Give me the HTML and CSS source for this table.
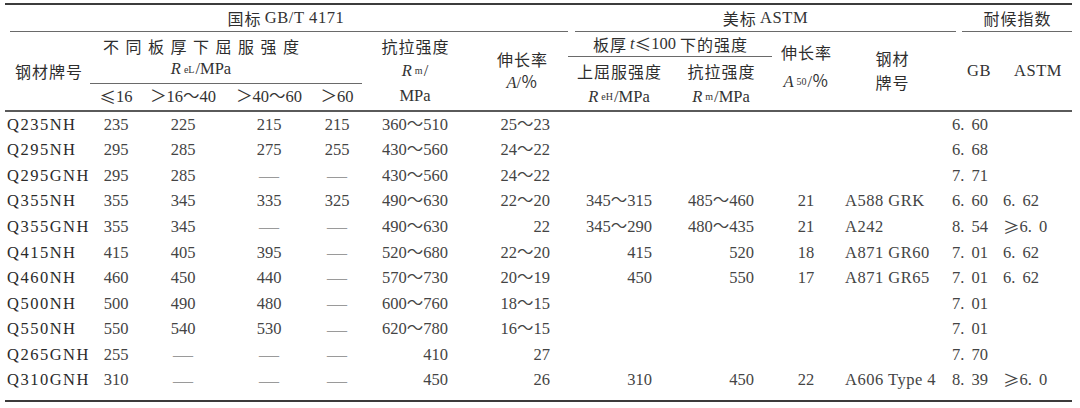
FILE: index.html
```html
<!DOCTYPE html>
<html lang="zh">
<head>
<meta charset="utf-8">
<link rel="stylesheet" href="styles.css">
</head>
<body>
<div class="tbl">
  <div class="head">
    <div class="c g1"><span class="zh">国标</span>&nbsp;<span class="lat">GB/T 4171</span></div>
    <div class="c g2"><span class="zh">美标</span>&nbsp;<span class="lat">ASTM</span></div>
    <div class="c g3"><span class="zh">耐候指数</span></div>

    <div class="c h-name"><span class="zh">钢材牌号</span></div>
    <div class="c stack h-yield">
      <div class="ln24"><span class="zh wide">不同板厚下屈服强度</span></div>
      <div class="ln24"><i>R</i><sub>eL</sub>/MPa</div>
    </div>
    <div class="c stack h-rm">
      <div class="ln25"><span class="zh">抗拉强度</span></div>
      <div class="ln25"><i>R</i><sub>m</sub>/</div>
      <div class="ln25">MPa</div>
    </div>
    <div class="c stack h-a">
      <div class="ln24"><span class="zh">伸长率</span></div>
      <div class="ln24"><i>A</i>/％</div>
    </div>
    <div class="c h-t"><span class="zh">板厚</span>&nbsp;<i>t</i><span class="cj">≤</span>100&nbsp;<span class="zh">下的强度</span></div>
    <div class="c stack h-a50">
      <div class="ln30"><span class="zh">伸长率</span></div>
      <div class="ln30"><i>A</i><sub>50</sub>/％</div>
    </div>
    <div class="c stack h-grade">
      <div class="ln24"><span class="zh">钢材</span></div>
      <div class="ln24"><span class="zh">牌号</span></div>
    </div>
    <div class="c h-gb"><span class="lat">GB</span></div>
    <div class="c h-astm"><span class="lat">ASTM</span></div>

    <div class="c h-up"><span class="zh">上屈服强度</span></div>
    <div class="c h-rm2"><span class="zh">抗拉强度</span></div>

    <div class="c h-t1"><span class="cj">≤</span>16</div>
    <div class="c h-t2">＞16～40</div>
    <div class="c h-t3">＞40～60</div>
    <div class="c h-t4">＞60</div>
    <div class="c h-reh"><i>R</i><sub>eH</sub>/MPa</div>
    <div class="c h-rm3"><i>R</i><sub>m</sub>/MPa</div>
  </div>

  <div class="body">
    <div class="c">Q235NH</div><div class="c">235</div><div class="c">225</div><div class="c">215</div><div class="c">215</div><div class="c">360～510</div><div class="c">25～23</div><div class="c"></div><div class="c"></div><div class="c"></div><div class="c"></div><div class="c">6. 60</div><div class="c"></div>
    <div class="c">Q295NH</div><div class="c">295</div><div class="c">285</div><div class="c">275</div><div class="c">255</div><div class="c">430～560</div><div class="c">24～22</div><div class="c"></div><div class="c"></div><div class="c"></div><div class="c"></div><div class="c">6. 68</div><div class="c"></div>
    <div class="c">Q295GNH</div><div class="c">295</div><div class="c">285</div><div class="c dash">—</div><div class="c dash">—</div><div class="c">430～560</div><div class="c">24～22</div><div class="c"></div><div class="c"></div><div class="c"></div><div class="c"></div><div class="c">7. 71</div><div class="c"></div>
    <div class="c">Q355NH</div><div class="c">355</div><div class="c">345</div><div class="c">335</div><div class="c">325</div><div class="c">490～630</div><div class="c">22～20</div><div class="c">345～315</div><div class="c">485～460</div><div class="c">21</div><div class="c">A588 GRK</div><div class="c">6. 60</div><div class="c">6. 62</div>
    <div class="c">Q355GNH</div><div class="c">355</div><div class="c">345</div><div class="c dash">—</div><div class="c dash">—</div><div class="c">490～630</div><div class="c">22</div><div class="c">345～290</div><div class="c">480～435</div><div class="c">21</div><div class="c">A242</div><div class="c">8. 54</div><div class="c"><span class="cj">≥</span>6. 0</div>
    <div class="c">Q415NH</div><div class="c">415</div><div class="c">405</div><div class="c">395</div><div class="c dash">—</div><div class="c">520～680</div><div class="c">22～20</div><div class="c">415</div><div class="c">520</div><div class="c">18</div><div class="c">A871 GR60</div><div class="c">7. 01</div><div class="c">6. 62</div>
    <div class="c">Q460NH</div><div class="c">460</div><div class="c">450</div><div class="c">440</div><div class="c dash">—</div><div class="c">570～730</div><div class="c">20～19</div><div class="c">450</div><div class="c">550</div><div class="c">17</div><div class="c">A871 GR65</div><div class="c">7. 01</div><div class="c">6. 62</div>
    <div class="c">Q500NH</div><div class="c">500</div><div class="c">490</div><div class="c">480</div><div class="c dash">—</div><div class="c">600～760</div><div class="c">18～15</div><div class="c"></div><div class="c"></div><div class="c"></div><div class="c"></div><div class="c">7. 01</div><div class="c"></div>
    <div class="c">Q550NH</div><div class="c">550</div><div class="c">540</div><div class="c">530</div><div class="c dash">—</div><div class="c">620～780</div><div class="c">16～15</div><div class="c"></div><div class="c"></div><div class="c"></div><div class="c"></div><div class="c">7. 01</div><div class="c"></div>
    <div class="c">Q265GNH</div><div class="c">255</div><div class="c dash">—</div><div class="c dash">—</div><div class="c dash">—</div><div class="c">410</div><div class="c">27</div><div class="c"></div><div class="c"></div><div class="c"></div><div class="c"></div><div class="c">7. 70</div><div class="c"></div>
    <div class="c">Q310GNH</div><div class="c">310</div><div class="c dash">—</div><div class="c dash">—</div><div class="c dash">—</div><div class="c">450</div><div class="c">26</div><div class="c">310</div><div class="c">450</div><div class="c">22</div><div class="c">A606 Type 4</div><div class="c">8. 39</div><div class="c"><span class="cj">≥</span>6. 0</div>
  </div>
</div>
</body>
</html>
```

FILE: styles.css
```css
* { box-sizing: border-box; margin: 0; padding: 0; }
body {
  background: #fff;
  font-family: "Liberation Serif", "Noto Sans CJK SC", serif;
  font-size: 16.5px;
  color: #444;
}
.tbl {
  margin: 3px 0 0 5px;
  width: 1067px;
  border-top: 2px solid #3c3c3c;
  border-bottom: 2px solid #3c3c3c;
}
.head, .body {
  display: grid;
  grid-template-columns: 87px 48px 86px 86px 50px 106px 100px 102px 102px 68px 110px 50px 72px;
}
.head {
  grid-template-rows: 27px 25px 27px 26px;
  border-bottom: 2px solid #5a5a5a;
  color: #333;
}
.body {
  grid-auto-rows: 25.6px;
  padding-bottom: 6px;
}
.c {
  display: flex;
  align-items: center;
  justify-content: center;
  white-space: nowrap;
  line-height: 1;
}
.stack { flex-direction: column; }
.ln24 { height: 24px; display: flex; align-items: center; justify-content: center; }
.ln25 { height: 25px; display: flex; align-items: center; justify-content: center; }
.ln30 { height: 30px; display: flex; align-items: center; justify-content: center; }

.zh {
  font-family: "Noto Sans CJK SC", sans-serif;
  font-size: 16px;
  letter-spacing: 1px;
  margin-right: -1px;
  color: #2e2e2e;
}
.zh.wide { letter-spacing: 6.5px; margin-right: -6.5px; }
.lat { letter-spacing: 0.6px; }
.cj { font-family: "Noto Sans CJK SC", sans-serif; }
i { font-style: italic; }
sub {
  font-size: 10px;
  vertical-align: -3px;
  margin: 0 1px 0 3px;
}

/* header placement */
.g1 { grid-column: 1 / 8; grid-row: 1; border-bottom: 1px solid #6a6a6a; margin-left: 5px; padding-right: 6px; }
.g2 { grid-column: 8 / 12; grid-row: 1; border-bottom: 1px solid #6a6a6a; margin: 0 -6px 0 7px; }
.g3 { grid-column: 12 / 14; grid-row: 1; border-bottom: 1px solid #6a6a6a; margin-left: 12px; }

.h-name { grid-column: 1; grid-row: 2 / 5; }
.h-yield { grid-column: 2 / 6; grid-row: 2 / 4; border-bottom: 1px solid #6a6a6a; margin-left: -2px; padding-right: 50px; }
.h-rm { grid-column: 6; grid-row: 2 / 5; }
.h-a { grid-column: 7; grid-row: 2 / 5; padding-left: 8px; }
.h-t { grid-column: 8 / 10; grid-row: 2; border-bottom: 1px solid #6a6a6a; }
.h-a50 { grid-column: 10; grid-row: 2 / 5; padding-bottom: 8px; }
.h-grade { grid-column: 11; grid-row: 2 / 5; padding-bottom: 3px; padding-right: 6px; }
.h-gb { grid-column: 12; grid-row: 2 / 5; padding-left: 8px; }
.h-astm { grid-column: 13; grid-row: 2 / 5; padding-left: 4px; }
.h-up { grid-column: 8; grid-row: 3; }
.h-rm2 { grid-column: 9; grid-row: 3; }
.h-t1 { grid-column: 2; grid-row: 4; }
.h-t2 { grid-column: 3; grid-row: 4; }
.h-t3 { grid-column: 4; grid-row: 4; }
.h-t4 { grid-column: 5; grid-row: 4; }
.h-reh { grid-column: 8; grid-row: 4; }
.h-rm3 { grid-column: 9; grid-row: 4; }

/* body column alignment */
.body > .c:nth-child(13n+1) { justify-content: flex-start; padding-left: 2px; color: #2a2a2a; letter-spacing: 1.5px; }
.body > .c:nth-child(13n+6) { justify-content: flex-end; padding-right: 20px; }
.body > .c:nth-child(13n+7) { justify-content: flex-end; padding-right: 18px; }
.body > .c:nth-child(13n+8) { justify-content: flex-end; padding-right: 18px; }
.body > .c:nth-child(13n+9) { justify-content: flex-end; padding-right: 18px; }
.body > .c:nth-child(13n+11) { justify-content: flex-start; padding-left: 5px; letter-spacing: 0.5px; }
.body > .c:nth-child(13n+12) { justify-content: flex-start; padding-left: 2px; word-spacing: 3px; }
.body > .c:nth-child(13n) { justify-content: flex-start; padding-left: 3px; word-spacing: 3px; }
.body > .c.dash { color: #9a9a9a; font-size: 20px; }
```
